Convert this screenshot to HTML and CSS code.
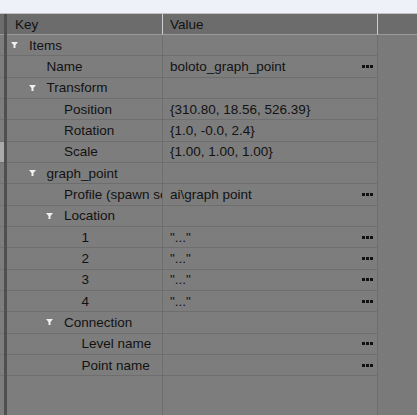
FILE: index.html
```html
<!DOCTYPE html>
<html>
<head>
<meta charset="utf-8">
<link rel="stylesheet" href="styles.css">
</head>
<body>
<div class="topbar"></div>
<div class="panel">
  <div class="strip">
    <div class="strip-head"></div>
    <div class="strip-cell"></div>
    <div class="strip-cell"></div>
    <div class="strip-cell"></div>
    <div class="strip-cell"></div>
    <div class="strip-cell"></div>
    <div class="strip-cell active"></div>
    <div class="strip-cell"></div>
    <div class="strip-cell"></div>
    <div class="strip-cell"></div>
    <div class="strip-cell"></div>
    <div class="strip-cell"></div>
    <div class="strip-cell"></div>
    <div class="strip-cell"></div>
    <div class="strip-cell"></div>
    <div class="strip-cell"></div>
    <div class="strip-cell"></div>
  </div>
  <div class="sep"></div>
  <div class="tree">
    <div class="row head">
      <div class="cell key">Key</div>
      <div class="cell val">Value</div>
      <div class="cell rest"></div>
    </div>

    <div class="row">
      <div class="cell key l0"><span class="tog"><svg class="arrow" width="7" height="6" viewBox="0 0 7 6"><polygon points="0,0 7,0 4.5,3 4.5,6 2.5,6 2.5,3"/></svg></span>Items</div>
      <div class="cell val"></div>
      <div class="cell rest"></div>
    </div>
    <div class="row">
      <div class="cell key l1"><span class="tog"></span>Name</div>
      <div class="cell val"><span>boloto_graph_point</span><svg class="more" width="11" height="3" viewBox="0 0 11 3"><rect x="0" y="0" width="3" height="3"/><rect x="4" y="0" width="3" height="3"/><rect x="8" y="0" width="3" height="3"/></svg></div>
      <div class="cell rest"></div>
    </div>
    <div class="row">
      <div class="cell key l1"><span class="tog"><svg class="arrow" width="7" height="6" viewBox="0 0 7 6"><polygon points="0,0 7,0 4.5,3 4.5,6 2.5,6 2.5,3"/></svg></span>Transform</div>
      <div class="cell val"></div>
      <div class="cell rest"></div>
    </div>
    <div class="row">
      <div class="cell key l2"><span class="tog"></span>Position</div>
      <div class="cell val"><span>{310.80, 18.56, 526.39}</span></div>
      <div class="cell rest"></div>
    </div>
    <div class="row">
      <div class="cell key l2"><span class="tog"></span>Rotation</div>
      <div class="cell val"><span>{1.0, -0.0, 2.4}</span></div>
      <div class="cell rest"></div>
    </div>
    <div class="row">
      <div class="cell key l2"><span class="tog"></span>Scale</div>
      <div class="cell val"><span>{1.00, 1.00, 1.00}</span></div>
      <div class="cell rest"></div>
    </div>
    <div class="row">
      <div class="cell key l1"><span class="tog"><svg class="arrow" width="7" height="6" viewBox="0 0 7 6"><polygon points="0,0 7,0 4.5,3 4.5,6 2.5,6 2.5,3"/></svg></span>graph_point</div>
      <div class="cell val"></div>
      <div class="cell rest"></div>
    </div>
    <div class="row">
      <div class="cell key l2"><span class="tog"></span>Profile (spawn settings)</div>
      <div class="cell val"><span>ai\graph point</span><svg class="more" width="11" height="3" viewBox="0 0 11 3"><rect x="0" y="0" width="3" height="3"/><rect x="4" y="0" width="3" height="3"/><rect x="8" y="0" width="3" height="3"/></svg></div>
      <div class="cell rest"></div>
    </div>
    <div class="row">
      <div class="cell key l2"><span class="tog"><svg class="arrow" width="7" height="6" viewBox="0 0 7 6"><polygon points="0,0 7,0 4.5,3 4.5,6 2.5,6 2.5,3"/></svg></span>Location</div>
      <div class="cell val"></div>
      <div class="cell rest"></div>
    </div>
    <div class="row">
      <div class="cell key l3"><span class="tog"></span>1</div>
      <div class="cell val"><span>"..."</span><svg class="more" width="11" height="3" viewBox="0 0 11 3"><rect x="0" y="0" width="3" height="3"/><rect x="4" y="0" width="3" height="3"/><rect x="8" y="0" width="3" height="3"/></svg></div>
      <div class="cell rest"></div>
    </div>
    <div class="row">
      <div class="cell key l3"><span class="tog"></span>2</div>
      <div class="cell val"><span>"..."</span><svg class="more" width="11" height="3" viewBox="0 0 11 3"><rect x="0" y="0" width="3" height="3"/><rect x="4" y="0" width="3" height="3"/><rect x="8" y="0" width="3" height="3"/></svg></div>
      <div class="cell rest"></div>
    </div>
    <div class="row">
      <div class="cell key l3"><span class="tog"></span>3</div>
      <div class="cell val"><span>"..."</span><svg class="more" width="11" height="3" viewBox="0 0 11 3"><rect x="0" y="0" width="3" height="3"/><rect x="4" y="0" width="3" height="3"/><rect x="8" y="0" width="3" height="3"/></svg></div>
      <div class="cell rest"></div>
    </div>
    <div class="row">
      <div class="cell key l3"><span class="tog"></span>4</div>
      <div class="cell val"><span>"..."</span><svg class="more" width="11" height="3" viewBox="0 0 11 3"><rect x="0" y="0" width="3" height="3"/><rect x="4" y="0" width="3" height="3"/><rect x="8" y="0" width="3" height="3"/></svg></div>
      <div class="cell rest"></div>
    </div>
    <div class="row">
      <div class="cell key l2"><span class="tog"><svg class="arrow" width="7" height="6" viewBox="0 0 7 6"><polygon points="0,0 7,0 4.5,3 4.5,6 2.5,6 2.5,3"/></svg></span>Connection</div>
      <div class="cell val"></div>
      <div class="cell rest"></div>
    </div>
    <div class="row">
      <div class="cell key l3"><span class="tog"></span>Level name</div>
      <div class="cell val"><span></span><svg class="more" width="11" height="3" viewBox="0 0 11 3"><rect x="0" y="0" width="3" height="3"/><rect x="4" y="0" width="3" height="3"/><rect x="8" y="0" width="3" height="3"/></svg></div>
      <div class="cell rest"></div>
    </div>
    <div class="row">
      <div class="cell key l3"><span class="tog"></span>Point name</div>
      <div class="cell val"><span></span><svg class="more" width="11" height="3" viewBox="0 0 11 3"><rect x="0" y="0" width="3" height="3"/><rect x="4" y="0" width="3" height="3"/><rect x="8" y="0" width="3" height="3"/></svg></div>
      <div class="cell rest"></div>
    </div>

    <div class="row filler">
      <div class="cell key"></div>
      <div class="cell val"></div>
      <div class="cell rest"></div>
    </div>
  </div>
</div>
</body>
</html>
```

FILE: styles.css
```css
html, body {
  margin: 0;
  padding: 0;
}

body {
  width: 417px;
  height: 415px;
  overflow: hidden;
  display: flex;
  flex-direction: column;
  background: #7d7d7d;
  font-family: "Liberation Sans", Arial, sans-serif;
  font-size: 13.5px;
  color: #121212;
}

.topbar {
  height: 13px;
  flex: none;
  background: #eff1f8;
  border-bottom: 1px solid #c3c3c3;
}

.panel {
  flex: 1;
  display: flex;
  min-height: 0;
}

.strip {
  width: 4px;
  flex: none;
  display: flex;
  flex-direction: column;
}

.strip-head {
  height: 21px;
  flex: none;
  box-sizing: border-box;
  background: #6c6c6c;
  border-bottom: 1px solid #9a9a9a;
}

.strip-cell {
  height: 21.33px;
  flex: none;
  box-sizing: border-box;
  border-bottom: 1px solid #727272;
}

.strip-cell.active {
  background: #aaaaaa;
}

.sep {
  width: 3px;
  flex: none;
  background: #4f4f4f;
}

.tree {
  flex: 1;
  display: flex;
  flex-direction: column;
}

.row {
  display: grid;
  grid-template-columns: 156px 215px 1fr;
  height: 21.33px;
  flex: none;
}

.row.head {
  height: 21px;
}

.row.filler {
  flex: 1;
  height: auto;
}

.cell {
  box-sizing: border-box;
  display: flex;
  align-items: center;
  overflow: hidden;
  white-space: nowrap;
  border-bottom: 1px solid #6e6e6e;
  border-right: 1px solid #6e6e6e;
}

.cell.rest {
  border-right: none;
  border-bottom: none;
  background: #7a7a7a;
}

.filler .cell {
  border-bottom: none;
}

.head .cell {
  background: #6c6c6c;
  border-bottom: 1px solid #9a9a9a;
  border-right: 1px solid #cfcfcf;
}

.head .cell.rest {
  border-right: none;
}

.head .key {
  padding-left: 8px;
}

.val {
  padding-left: 7px;
  padding-right: 4px;
  justify-content: space-between;
}

.l0 { padding-left: 4px; }
.l1 { padding-left: 21.5px; }
.l2 { padding-left: 39px; }
.l3 { padding-left: 56.5px; }

.tog {
  width: 18px;
  flex: none;
  display: flex;
  align-items: center;
}

.arrow {
  display: block;
  fill: #f0f0f0;
}

.more {
  display: block;
  flex: none;
  fill: #111111;
}
```
